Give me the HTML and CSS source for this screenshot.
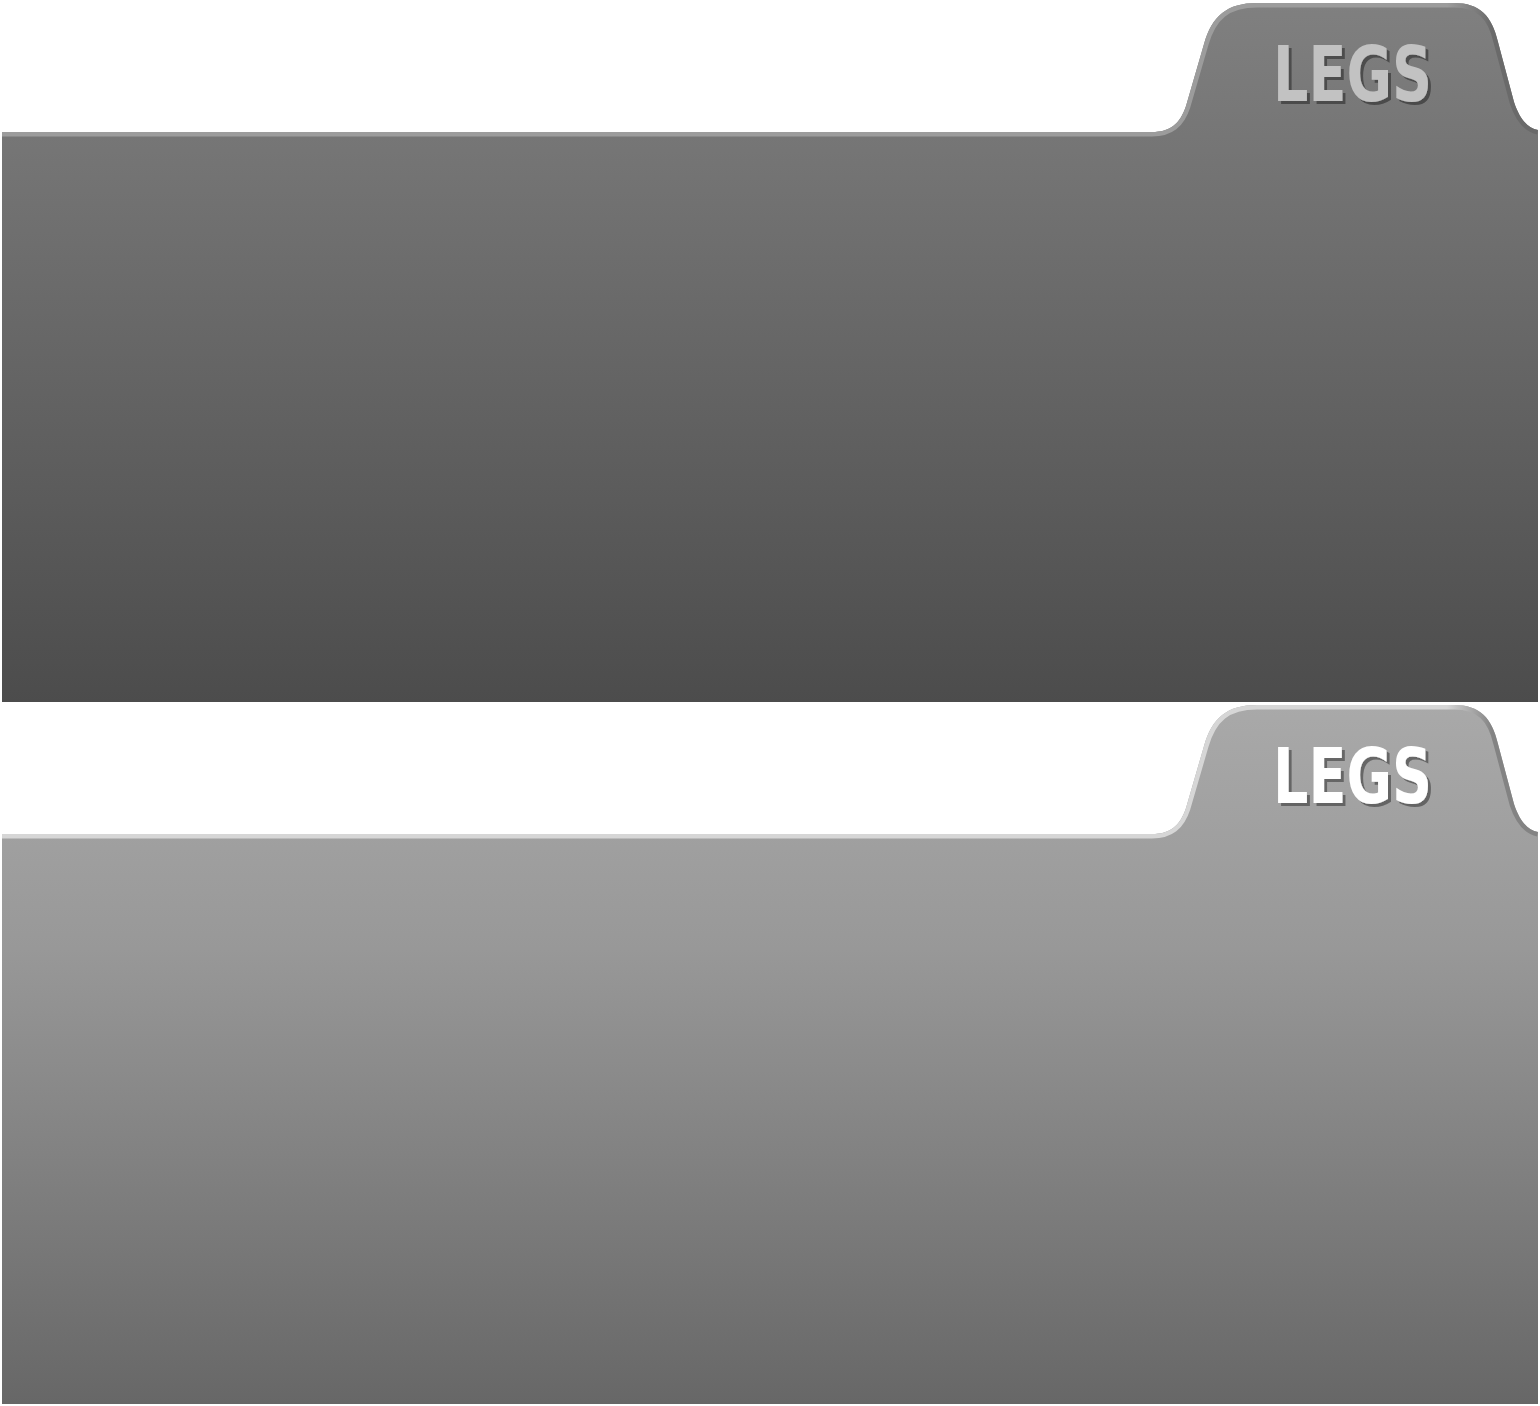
FILE: index.html
```html
<!DOCTYPE html>
<html>
<head>
<meta charset="utf-8">
<link rel="stylesheet" href="styles.css">
</head>
<body>
<svg width="0" height="0" class="defs" aria-hidden="true">
  <defs>
    <linearGradient id="fillDark" x1="0" y1="0" x2="0" y2="700" gradientUnits="userSpaceOnUse">
      <stop offset="0" stop-color="#808080"/>
      <stop offset="1" stop-color="#4c4c4c"/>
    </linearGradient>
    <linearGradient id="fillLight" x1="0" y1="0" x2="0" y2="700" gradientUnits="userSpaceOnUse">
      <stop offset="0" stop-color="#a9a9a9"/>
      <stop offset="0.35" stop-color="#989898"/>
      <stop offset="1" stop-color="#676767"/>
    </linearGradient>
    <linearGradient id="edgeDark" x1="1445" y1="0" x2="1490" y2="0" gradientUnits="userSpaceOnUse">
      <stop offset="0" stop-color="#9c9c9c"/>
      <stop offset="1" stop-color="#6a6a6a"/>
    </linearGradient>
    <linearGradient id="edgeLight" x1="1445" y1="0" x2="1490" y2="0" gradientUnits="userSpaceOnUse">
      <stop offset="0" stop-color="#d6d6d6"/>
      <stop offset="1" stop-color="#838383"/>
    </linearGradient>
    <clipPath id="folderClip">
      <path d="M0,130 H1150 C1168,130 1178,122 1184,104 L1202,42 C1210,14 1225,1 1255,1 H1452 C1478,1 1490,14 1496,40 L1512,100 C1518,118 1526,126 1536,128 V700 H0 Z"/>
    </clipPath>
    <filter id="textShadow" x="-10%" y="-20%" width="130%" height="150%">
      <feDropShadow dx="3" dy="3" stdDeviation="0.6" flood-color="#000" flood-opacity="0.38"/>
    </filter>
  </defs>
</svg>

<section class="folder folder-dark">
  <svg class="folder-shape" viewBox="0 0 1536 700" width="1536" height="700">
    <path class="folder-fill" d="M0,130 H1150 C1168,130 1178,122 1184,104 L1202,42 C1210,14 1225,1 1255,1 H1452 C1478,1 1490,14 1496,40 L1512,100 C1518,118 1526,126 1536,128 V700 H0 Z"/>
    <path class="folder-edge" clip-path="url(#folderClip)" d="M0,130 H1150 C1168,130 1178,122 1184,104 L1202,42 C1210,14 1225,1 1255,1 H1452 C1478,1 1490,14 1496,40 L1512,100 C1518,118 1526,126 1536,128"/>
    <text class="folder-label" x="1271" y="99" textLength="159" lengthAdjust="spacingAndGlyphs" filter="url(#textShadow)">LEGS</text>
  </svg>
</section>

<section class="folder folder-light">
  <svg class="folder-shape" viewBox="0 0 1536 700" width="1536" height="700">
    <path class="folder-fill" d="M0,130 H1150 C1168,130 1178,122 1184,104 L1202,42 C1210,14 1225,1 1255,1 H1452 C1478,1 1490,14 1496,40 L1512,100 C1518,118 1526,126 1536,128 V700 H0 Z"/>
    <path class="folder-edge" clip-path="url(#folderClip)" d="M0,130 H1150 C1168,130 1178,122 1184,104 L1202,42 C1210,14 1225,1 1255,1 H1452 C1478,1 1490,14 1496,40 L1512,100 C1518,118 1526,126 1536,128"/>
    <text class="folder-label" x="1271" y="99" textLength="159" lengthAdjust="spacingAndGlyphs" filter="url(#textShadow)">LEGS</text>
  </svg>
</section>
</body>
</html>
```

FILE: styles.css
```css
html, body {
  margin: 0;
  padding: 0;
  background: #ffffff;
}

body {
  padding: 2px;
  display: flex;
  flex-direction: column;
  gap: 2px;
  font-family: "DejaVu Sans Condensed", "DejaVu Sans", sans-serif;
}

.defs {
  position: absolute;
  width: 0;
  height: 0;
}

.folder {
  display: block;
  width: 1536px;
  height: 700px;
}

.folder-shape {
  display: block;
}

.folder-edge {
  fill: none;
  stroke-width: 9;
}

.folder-label {
  font-family: "DejaVu Sans Condensed", "DejaVu Sans", sans-serif;
  font-weight: bold;
  font-size: 77px;
}

.folder-dark .folder-fill { fill: url(#fillDark); }
.folder-dark .folder-edge { stroke: url(#edgeDark); }
.folder-dark .folder-label { fill: #c2c2c2; }

.folder-light .folder-fill { fill: url(#fillLight); }
.folder-light .folder-edge { stroke: url(#edgeLight); }
.folder-light .folder-label { fill: #ffffff; }
```
